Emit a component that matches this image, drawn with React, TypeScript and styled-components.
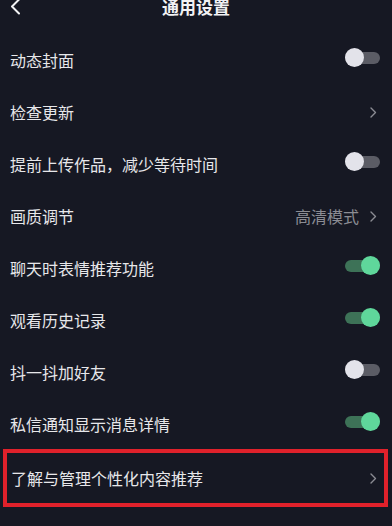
import React, { useState } from 'react';
import styled, { createGlobalStyle } from 'styled-components';

const GlobalStyle = createGlobalStyle`
    html, body {
        margin: 0;
        padding: 0;
        background: #161823;
    }
    * {
        box-sizing: border-box;
    }
`

const Page = styled.div`
    width: 392px;
    height: 526px;
    overflow: hidden;
    background-color: #161823;
    font-family: "Noto Sans CJK SC", "Noto Sans", sans-serif;
    color: #e7e7ea;
`

const Header = styled.div`
    position: relative;
    height: 34px;
    display: flex;
    justify-content: center;
    align-items: flex-start;
`

const BackButton = styled.div`
    position: absolute;
    left: 10px;
    top: -2px;
    width: 14px;
    height: 18px;
    display: flex;
    align-items: center;
`

const Title = styled.div`
    font-size: 17px;
    font-weight: 700;
    line-height: 14px;
    color: #f2f2f4;
`

const List = styled.div`
    display: flex;
    flex-direction: column;
`

const Row = styled.div<{ $boxed?: boolean }>`
    height: ${p => p.$boxed ? '58px' : '52px'};
    display: flex;
    align-items: center;
    justify-content: space-between;
    padding: ${p => p.$boxed ? '0 4px 0 4px' : '0 12px 0 10px'};
    margin: ${p => p.$boxed ? '-1px 4px 0 3px' : '0'};
    border: ${p => p.$boxed ? '4px solid #e0212b' : 'none'};
`

const Label = styled.span`
    font-size: 16px;
    line-height: 20px;
    color: #e7e7ea;
`

const Right = styled.div`
    display: flex;
    align-items: center;
    gap: 11px;
    padding-right: 3px;
`

const Value = styled.span`
    font-size: 16px;
    line-height: 20px;
    color: #8b8c93;
`

const Track = styled.div<{ $on: boolean }>`
    position: relative;
    width: 35px;
    height: 12px;
    border-radius: 6px;
    margin-top: -4px;
    background-color: ${p => p.$on ? '#3d7257' : '#5b5c65'};
    cursor: pointer;
`

const Knob = styled.div<{ $on: boolean }>`
    position: absolute;
    top: -4px;
    left: ${p => p.$on ? '16px' : '0'};
    width: 19px;
    height: 19px;
    border-radius: 50%;
    background-color: ${p => p.$on ? '#5fd79b' : '#e3e3ea'};
`

const Chevron = () => (
    <svg width="7" height="11" viewBox="0 0 7 11">
        <path d="M1 1 L5.5 5.5 L1 10" fill="none" stroke="#8b8c93" strokeWidth="1.4" strokeLinecap="round" strokeLinejoin="round" />
    </svg>
)

const Toggle = ({ initial }: { initial: boolean }) => {
    const [on, setOn] = useState(initial)
    return (
        <Track $on={on} onClick={() => setOn(!on)}>
            <Knob $on={on} />
        </Track>
    )
}

type Item = {
    label: string
    kind: 'toggle' | 'link'
    on?: boolean
    value?: string
    boxed?: boolean
}

const items: Item[] = [
    { label: '动态封面', kind: 'toggle', on: false },
    { label: '检查更新', kind: 'link' },
    { label: '提前上传作品，减少等待时间', kind: 'toggle', on: false },
    { label: '画质调节', kind: 'link', value: '高清模式' },
    { label: '聊天时表情推荐功能', kind: 'toggle', on: true },
    { label: '观看历史记录', kind: 'toggle', on: true },
    { label: '抖一抖加好友', kind: 'toggle', on: false },
    { label: '私信通知显示消息详情', kind: 'toggle', on: true },
    { label: '了解与管理个性化内容推荐', kind: 'link', boxed: true },
]

const App = () => {
    return (
        <>
            <GlobalStyle />
            <Page>
                <Header>
                    <BackButton>
                        <svg width="11" height="18" viewBox="0 0 11 18">
                            <path d="M9 1.5 L2 8.5 L9 15.5" fill="none" stroke="#f2f2f4" strokeWidth="2" strokeLinecap="round" strokeLinejoin="round" />
                        </svg>
                    </BackButton>
                    <Title>通用设置</Title>
                </Header>
                <List>
                    {items.map((it) => (
                        <Row key={it.label} $boxed={it.boxed}>
                            <Label>{it.label}</Label>
                            {it.kind === 'toggle'
                                ? <Toggle initial={!!it.on} />
                                : <Right>
                                    {it.value ? <Value>{it.value}</Value> : null}
                                    <Chevron />
                                  </Right>}
                        </Row>
                    ))}
                </List>
            </Page>
        </>
    )
}

export default App;
